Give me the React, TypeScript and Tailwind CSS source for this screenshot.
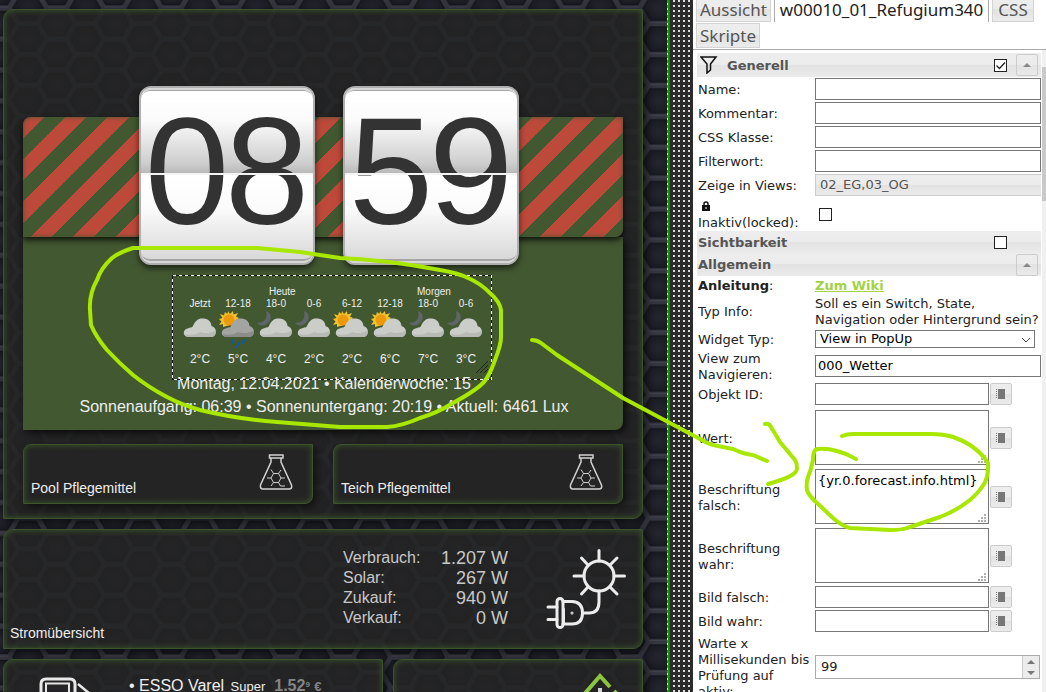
import { useState } from "react";
import type { ReactNode } from "react";

const FORECAST = [
  { time: "Jetzt", icon: "cloud",  temp: "2°C" },
  { time: "12-18", icon: "rain",   temp: "5°C" },
  { time: "18-0",  icon: "night",  temp: "4°C" },
  { time: "0-6",   icon: "night",  temp: "2°C" },
  { time: "6-12",  icon: "sunny",  temp: "2°C" },
  { time: "12-18", icon: "sunny",  temp: "6°C" },
  { time: "18-0",  icon: "night",  temp: "7°C" },
  { time: "0-6",   icon: "night",  temp: "3°C" },
];

const POWER = [
  ["Verbrauch:", "1.207 W"],
  ["Solar:", "267 W"],
  ["Zukauf:", "940 W"],
  ["Verkauf:", "0 W"],
];

const PANEL = "border border-[#3c532c] bg-[#242424]/85 shadow-[inset_0_0_6px_#3d5a2a,3px_3px_8px_rgba(0,0,0,0.6)]";
const INPUT = "h-[22px] min-w-0 border border-[#767676] bg-white px-[2px] text-[13px] text-black outline-none";
const BAR = "bg-[linear-gradient(#ededed_0%,#ececec_50%,#e2e2e2_50%,#ebebeb_100%)]";

function HexBackground() {
  return (
    <svg className="absolute inset-0 h-full w-full" aria-hidden="true">
      <defs>
        <radialGradient id="cell">
          <stop offset="0" stopColor="#24252f" />
          <stop offset="1" stopColor="#1a1b22" />
        </radialGradient>
        <pattern id="hex" width="57.3" height="30.9" patternUnits="userSpaceOnUse" patternTransform="translate(28 39)">
          <rect width="58" height="31" fill="#34353f" />
          {[[0, 0], [57.3, 0], [0, 30.9], [57.3, 30.9], [28.65, 15.45]].map(([x, y], i) => (
            <g key={i} transform={`translate(${x} ${y})`}>
              <path d="M-15 0L-8 -12H8L15 0L8 12H-8Z" fill="url(#cell)" stroke="#16171d" strokeWidth="1.5" />
              <path d="M-9 14.500H9" stroke="#41424e" strokeWidth="1" />
            </g>
          ))}
        </pattern>
      </defs>
      <rect width="100%" height="100%" fill="url(#hex)" />
    </svg>
  );
}

function WeatherIcon({ kind }: { kind: string }) {
  return (
    <svg viewBox="0 0 38 38" className="block h-[38px] w-[38px]">
      {(kind === "sunny" || kind === "rain") && (
        <g>
          <path d="M9 0L11 3L14 0L14.500 3.500L19 2L17 5.500L20 7L17 9L18 12L4 16L4 13L0 14L2.500 10.500L0 8L3.500 7L1 3L5 4.500L6 1L8.500 3Z" fill="#f2c230" />
          <circle cx="10" cy="9" r="5.500" fill="#ec9a0c" />
        </g>
      )}
      {kind === "night" && <path d="M9 0C16 2 15 11 8 14C5 15 2 14 0 12C7 12 11 8 9 0Z" fill="#5f666a" />}
      <path
        d="M8 26C1 26 1 18 8 17C10 16 11 17 12 15C14 10 17 7.500 21 7.500C27 7.500 30 10 30.500 15C37 17 36 26 30 26Z"
        fill={kind === "rain" ? "#a3a5a2" : "#cbcdc9"}
      />
      <path
        d="M4 23C11 25 16 23 19 21C24 23 30 22 34.500 20C35 24 33 26 30 26H8C6 26 4.500 25 4 23Z"
        fill={kind === "rain" ? "#8b8d8a" : "#b7bab5"}
      />
      {kind === "rain" && (
        <path d="M13 29L14.500 32M20 32L17.500 36M25.500 29L23.500 32" stroke="#0d5ba6" strokeWidth="2" strokeLinecap="round" />
      )}
    </svg>
  );
}

function FlipCard({ digits }: { digits: string }) {
  return (
    <div className="relative h-[179px] w-[176px] rounded-[12px] border-2 border-[#aeaeae] bg-white shadow-[0_3px_6px_rgba(0,0,0,0.6)]">
      <div className="flex h-full flex-col rounded-[10px] border-y-2 border-[#d6d6d6]">
        <div className="flex-1 rounded-t-[9px] border-t border-[#a5a5a5] bg-[linear-gradient(#fff_0%,#fbfbfb_35%,#cfcfcf_85%,#b5b5b5_100%)]" />
        <div className="flex-1 rounded-b-[9px] border-b-2 border-[#a5a5a5] bg-[linear-gradient(#fff_0%,#fbfbfb_40%,#d8d8d8_100%)]" />
      </div>
      <div className="absolute inset-0 flex items-center justify-center pb-[10px] text-[152px] leading-none text-[#333]">
        {digits.split("").map((d, i) => (
          <span key={i} className="flex w-20 justify-center">{d}</span>
        ))}
      </div>
      <div className="absolute inset-x-0 top-[85px] h-[2px] bg-[#f4f4f4]" />
    </div>
  );
}

function Flask() {
  return (
    <svg viewBox="0 0 34 36" className="h-9 w-[34px]" fill="none" stroke="#d2d2d2" strokeWidth="1.500">
      <path d="M10.500 1H24V4H10.500ZM12 4V8L1.500 31Q0.800 35 4 35H30Q33.500 35 32.500 31L22 8V4" />
      <path d="M14.500 19.500H19.500L22 24L19.500 28.500H14.500L12 24ZM14.500 19.500L12 15.500M19.500 19.500L22 16M22 24H26M12 24H8M14.500 28.500L12 32M19.500 28.500L21.500 32H26" strokeWidth="1" />
    </svg>
  );
}

function CareTile({ label }: { label: string }) {
  return (
    <div className={`${PANEL} flex h-[60px] flex-1 rounded-tl-[8px] rounded-br-[8px] pr-[19px] pl-[7px]`}>
      <span className="mt-[34px] flex-1 text-[14px] leading-[18px] text-[#eee]">{label}</span>
      <div className="mt-[9px]"><Flask /></div>
    </div>
  );
}

function SunPlug() {
  return (
    <svg viewBox="0 0 82 82" className="h-[82px] w-[82px]" fill="none" stroke="#ececec" strokeWidth="3" strokeLinecap="round" strokeLinejoin="round">
      <circle cx="53" cy="28" r="15" />
      <path d="M53 2.500V13M28 28H38M68 28H78.500M35.500 10L42 17M71 10L64 17M35.500 46L42 39M71 46L64 39" />
      <path d="M53 43V54Q53 65 43 65H37M2 59H11M2 71.500H11" />
      <path d="M17 53.500H26Q36.500 54 36.500 65T26 76H17" />
      <rect x="11" y="50.500" width="6" height="29" rx="3" />
      <path d="M18 61V75" strokeWidth="2" />
      <circle cx="26" cy="65" r="0.500" strokeWidth="2" />
    </svg>
  );
}

function Weather() {
  return (
    <div className="relative mt-[38px] ml-[149px] h-[105px] w-[320px] pt-[11px] pl-[9px]">
      <svg className="absolute inset-0 h-full w-full" fill="none" shapeRendering="crispEdges" aria-hidden="true">
        <rect x="0.500" y="0.500" width="319" height="104" stroke="#111" />
        <rect x="0.500" y="0.500" width="319" height="104" stroke="#fff" strokeDasharray="3 3" />
        <path d="M308 98L316 90M312 98L316 94M304 98L316 86" stroke="#222" />
      </svg>
      <table className="w-[304px] table-fixed text-center text-[#eee]">
        <thead className="text-[10px] leading-[12px]">
          <tr className="[&>th]:font-normal">
            <th /><th />
            <th><span className="pl-[12px]">Heute</span></th>
            <th /><th /><th />
            <th><span className="pl-[8px]">Morgen</span></th>
            <th />
          </tr>
          <tr className="[&>th]:font-normal">
            {FORECAST.map((f, i) => <th key={i}>{f.time}</th>)}
          </tr>
        </thead>
        <tbody>
          <tr>
            {FORECAST.map((f, i) => <td key={i} className="pt-px"><WeatherIcon kind={f.icon} /></td>)}
          </tr>
          <tr className="text-[12px] leading-[20px]">
            {FORECAST.map((f, i) => <td key={i}>{f.temp}</td>)}
          </tr>
        </tbody>
      </table>
    </div>
  );
}

function Dashboard() {
  return (
    <main className="relative min-w-0 flex-1 overflow-hidden bg-[#1e1f26] font-['Liberation_Sans',Arial,sans-serif]">
      <HexBackground />
      <div className="relative flex flex-col gap-[10px] pt-[9px] pr-6 pl-[3px]">
        <section className={`${PANEL} h-[510px] rounded-tl-[10px] rounded-tr-[2px] rounded-br-[10px] px-[19px] pt-[107px]`}>
          <div className="relative z-10 h-[120px] rounded-tl-[8px] rounded-br-[8px] bg-[repeating-linear-gradient(135deg,#bd493a_0px,#bd493a_15px,#425831_15px,#425831_30px)] shadow-[inset_0_0_5px_#425831,0_3px_6px_rgba(0,0,0,0.8)]">
            <div className="absolute top-[-31px] left-[116px] flex gap-7">
              <FlipCard digits="08" />
              <FlipCard digits="59" />
            </div>
          </div>
          <div className="flex h-[193px] flex-col rounded-br-[8px] bg-[#425831] shadow-[3px_3px_8px_rgba(0,0,0,0.7)]">
            <Weather />
            <div className="-mt-2 pl-[2px] text-center text-[16px] leading-[23px] text-[#eee]">
              <p>Montag, 12.04.2021 • Kalenderwoche: 15</p>
              <p>Sonnenaufgang: 06:39 • Sonnenuntergang: 20:19 • Aktuell: 6461 Lux</p>
            </div>
          </div>
          <div className="mt-[14px] flex gap-5">
            <CareTile label="Pool Pflegemittel" />
            <CareTile label="Teich Pflegemittel" />
          </div>
        </section>

        <section className={`${PANEL} flex h-[120px] rounded-tl-[10px] rounded-tr-[2px] rounded-br-[10px] pr-[14px] pl-[6px]`}>
          <h2 className="mt-[94px] flex-1 text-[14px] leading-[18px] text-[#eee]">Stromübersicht</h2>
          <table className="mt-[18px] mr-[38px] w-[165px] self-start text-[#c8c8c8]">
            <tbody>
              {POWER.map(([name, value]) => (
                <tr key={name}>
                  <th scope="row" className="text-left align-top text-[16px] leading-[20px] font-normal">{name}</th>
                  <td className="text-right text-[18px] leading-[20px]">{value}</td>
                </tr>
              ))}
            </tbody>
          </table>
          <div className="mt-[18px]"><SunPlug /></div>
        </section>

        <div className="grid grid-cols-[380fr_250fr] gap-[10px]">
          <section className={`${PANEL} flex h-[120px] rounded-tl-[10px] rounded-tr-[2px] pt-4 pl-[34px]`}>
            <svg viewBox="0 0 60 60" className="h-[60px] w-[60px]" fill="none" stroke="#e8e8e8" strokeWidth="3">
              <path d="M3 60V8Q3 3 8 3H32Q37 3 37 8V60" />
              <path d="M8 30V7.500H31V30Z" strokeWidth="2" />
              <path d="M40 8L52 18V40" strokeWidth="2.500" />
            </svg>
            <p className="ml-[31px] text-[16px] leading-[20px] whitespace-nowrap text-[#eee]">
              • ESSO Varel <span className="ml-[2px] text-[13px]">Super</span>
              <b className="ml-[9px] text-[#858585]">1.52<sup className="text-[8px]">9</sup> <span className="text-[13px]">€</span></b>
            </p>
          </section>
          <section className={`${PANEL} flex h-[120px] justify-end rounded-tl-[10px] rounded-tr-[2px] pt-[12px] pr-[14px]`}>
            <svg viewBox="0 0 56 56" className="h-14 w-14" fill="none" strokeWidth="4">
              <path d="M2 34L28 4L38 15M42 19L54 31" stroke="#8cc63f" />
              <path d="M28 16V34" stroke="#d8d8d8" />
            </svg>
          </section>
        </div>
      </div>
    </main>
  );
}

function PickButton({ label }: { label: string }) {
  return (
    <button aria-label={label} className={`${BAR} ml-[1px] flex h-[22px] w-[22px] shrink-0 items-center justify-center rounded-[2px] border border-[#ccc]`}>
      <svg viewBox="0 0 10 10" className="h-[10px] w-[10px]" fill="#777" shapeRendering="crispEdges">
        <path d="M2 0H9V10H2Z" />
        <path d="M0 0H1V1H0ZM0 2H1V3H0ZM0 4H1V5H0ZM0 6H1V7H0ZM0 8H1V9H0Z" />
      </svg>
    </button>
  );
}

function CollapseButton({ label }: { label: string }) {
  return (
    <button aria-label={label} className="mr-[3px] flex h-[22px] w-[22px] items-center justify-center rounded-[2px] border border-[#ccc]">
      <svg viewBox="0 0 8 4" className="h-1 w-2" fill="#888"><path d="M4 0L8 4H0Z" /></svg>
    </button>
  );
}

function Box({ id, checked, onChange, label, className }: { id: string; checked: boolean; onChange: () => void; label?: string; className: string }) {
  return (
    <span className={`${className} relative block h-[13px] w-[13px]`}>
      <input id={id} type="checkbox" aria-label={label} checked={checked} onChange={onChange}
        className="block h-[13px] w-[13px] appearance-none border border-[#222] bg-white" />
      {checked && (
        <svg viewBox="0 0 13 13" className="pointer-events-none absolute inset-0" fill="none" stroke="#222" strokeWidth="1.300">
          <path d="M2.500 6.500L5.500 9.500L11 3.500" />
        </svg>
      )}
    </span>
  );
}

function Row({ id, label, className = "h-6", children }: { id: string; label: ReactNode; className?: string; children: ReactNode }) {
  return (
    <div className={`${className} flex shrink-0 items-center`}>
      <label htmlFor={id} className="w-[118px] shrink-0 pt-[2px] pr-1 pl-px">{label}</label>
      {children}
    </div>
  );
}

function TextRow({ id, label, value = "", pick, className }: { id: string; label: string; value?: string; pick?: boolean; className?: string }) {
  return (
    <Row id={id} label={label} className={className}>
      <input id={id} type="text" defaultValue={value} className={pick ? `${INPUT} w-[174px]` : `${INPUT} flex-1`} />
      {pick && <PickButton label={`${label} auswählen`} />}
    </Row>
  );
}

function AreaRow({ id, label, value = "" }: { id: string; label: string; value?: string }) {
  return (
    <Row id={id} label={label} className="h-[59px]">
      <span className="relative block h-[55px] w-[174px]">
        <textarea id={id} defaultValue={value}
          className="block h-full w-full resize-none overflow-hidden border border-[#767676] bg-white px-[2px] py-[2px] text-[13px] leading-[18px] whitespace-nowrap text-black outline-none" />
        <svg viewBox="0 0 8 8" className="pointer-events-none absolute right-[3px] bottom-[2px] h-2 w-2" fill="#b0b0b0" shapeRendering="crispEdges">
          <path d="M6 0H8V2H6ZM3 3H5V5H3ZM6 3H8V5H6ZM0 6H2V8H0ZM3 6H5V8H3ZM6 6H8V8H6Z" />
        </svg>
      </span>
      <PickButton label={`${label} auswählen`} />
    </Row>
  );
}

function Inspector() {
  const [general, setGeneral] = useState(true);
  const [locked, setLocked] = useState(false);
  const [visibility, setVisibility] = useState(false);
  const tab = `${BAR} h-[25px] border border-[#d3d3d3] px-[3px] text-[#555]`;

  return (
    <aside className="flex h-full w-[353px] shrink-0 flex-col bg-white font-['DejaVu_Sans',Verdana,sans-serif] text-[13px] leading-4 text-[#222]">
      <nav className="flex h-[50px] shrink-0 flex-wrap content-end gap-x-[3px] gap-y-px border-b border-[#aaa] pb-px pl-[3px] font-['Noto_Sans',Verdana,sans-serif] text-[17px] leading-[23px]">
        <button className={tab}>Aussicht</button>
        <button className="h-[25px] border-x border-[#aaa] bg-white px-[5px] text-[#222]">w00010_01_Refugium340</button>
        <button className={`${BAR} h-[25px] border border-[#d3d3d3] px-[5px] text-[#555]`}>CSS</button>
        <button className={tab}>Skripte</button>
      </nav>

      <div className="flex min-h-0 flex-1">
        <form className="flex min-w-0 flex-1 flex-col overflow-hidden pt-[3px] pl-1" onSubmit={e => e.preventDefault()}>
          <div className={`${BAR} flex h-6 shrink-0 items-center`}>
            <svg viewBox="0 0 18 18" className="ml-[3px] h-[18px] w-[18px]" fill="none" stroke="#111" strokeWidth="1.500">
              <path d="M1 1H16L10.500 8V14L7 17V8Z" />
            </svg>
            <h2 className="ml-[9px] flex-1 pt-[2px] font-bold text-[#555]">Generell</h2>
            <Box id="general" label="Generell" checked={general} onChange={() => setGeneral(!general)} className="mr-[9px]" />
            <CollapseButton label="Generell einklappen" />
          </div>
          <TextRow id="name" label="Name:" />
          <TextRow id="comment" label="Kommentar:" />
          <TextRow id="css" label="CSS Klasse:" />
          <TextRow id="filter" label="Filterwort:" />
          <Row id="views" label="Zeige in Views:">
            <button id="views" type="button" className={`${BAR} h-[22px] flex-1 border border-r-0 border-[#ccc] px-1 text-left text-[#555]`}>02_EG,03_OG</button>
          </Row>
          <Row id="locked" className="h-[34px]" label={
            <>
              <svg viewBox="0 0 8 10" className="mt-[2px] mb-1 ml-1 h-[10px] w-2" fill="none">
                <path d="M2 5V3Q2 1 4 1T6 3V5" stroke="#111" strokeWidth="1.500" />
                <path d="M0 4H8V10H0Z" fill="#111" />
                <path d="M3.500 6H4.500V8H3.500Z" fill="#fff" />
              </svg>
              Inaktiv(locked):
            </>
          }>
            <Box id="locked" checked={locked} onChange={() => setLocked(!locked)} className="ml-1" />
          </Row>
          <div className={`${BAR} flex h-[22px] shrink-0 items-center pl-px`}>
            <h2 className="flex-1 pt-[2px] font-bold text-[#555]">Sichtbarkeit</h2>
            <Box id="visibility" label="Sichtbarkeit" checked={visibility} onChange={() => setVisibility(!visibility)} className="mr-[34px]" />
          </div>
          <div className={`${BAR} flex h-[23px] shrink-0 items-center pl-px`}>
            <h2 className="flex-1 font-bold text-[#555]">Allgemein</h2>
            <CollapseButton label="Allgemein einklappen" />
          </div>
          <div className="flex h-[19px] shrink-0 items-center">
            <span className="w-[118px] pl-px"><b>Anleitung</b>:</span>
            <a href="#wiki" className="font-bold text-[#a2d246] underline">Zum Wiki</a>
          </div>
          <div className="flex h-[33px] shrink-0 items-center">
            <span className="w-[118px] shrink-0 pl-px">Typ Info:</span>
            <p className="whitespace-nowrap">Soll es ein Switch, State,<br />Navigation oder Hintergrund sein?</p>
          </div>
          <Row id="type" label="Widget Typ:" className="h-[21px]">
            <span className="relative mr-[6px] block flex-1">
              <select id="type" className="block h-[18px] w-full appearance-none border border-[#767676] bg-white pl-1 text-[13px] leading-4 text-black">
                <option>View in PopUp</option>
              </select>
              <svg viewBox="0 0 10 6" className="pointer-events-none absolute top-[7px] right-[4px] h-[6px] w-[10px]" fill="none" stroke="#444">
                <path d="M1 1L5 5L9 1" />
              </svg>
            </span>
          </Row>
          <TextRow id="view" label="View zum Navigieren:" value="000_Wetter" className="h-[33px]" />
          <TextRow id="oid" label="Objekt ID:" pick className="mb-[2px] h-6" />
          <AreaRow id="value" label="Wert:" />
          <AreaRow id="captionFalse" label="Beschriftung falsch:" value="{yr.0.forecast.info.html}" />
          <AreaRow id="captionTrue" label="Beschriftung wahr:" />
          <TextRow id="imageFalse" label="Bild falsch:" pick />
          <TextRow id="imageTrue" label="Bild wahr:" pick />
          <Row id="delay" label="Warte x Millisekunden bis Prüfung auf aktiv:" className="mt-px h-[66px]">
            <span className="mr-px flex h-6 flex-1 border border-[#aaa]">
              <input id="delay" type="text" defaultValue="99" className="min-w-0 flex-1 px-[5px] text-[13px] text-[#222] outline-none" />
              <span className="flex w-[17px] flex-col border-l border-[#ccc] bg-[#ececec]">
                <button aria-label="Mehr" className="flex flex-1 items-center justify-center">
                  <svg viewBox="0 0 8 4" className="h-1 w-2" fill="#777"><path d="M4 0L8 4H0Z" /></svg>
                </button>
                <button aria-label="Weniger" className="flex flex-1 items-center justify-center">
                  <svg viewBox="0 0 8 4" className="h-1 w-2" fill="#777"><path d="M4 4L8 0H0Z" /></svg>
                </button>
              </span>
            </span>
          </Row>
        </form>
        <div className="ml-px w-1 bg-[#f0f0f0] pt-[17px]">
          <div className="h-[134px] bg-[#c9c9c9]" />
        </div>
      </div>
    </aside>
  );
}

// freehand marker strokes over the editor
function Annotations() {
  return (
    <svg viewBox="0 0 1046 692" className="pointer-events-none absolute top-0 left-0 z-30 h-[692px] w-[1046px]" fill="none" stroke="#a8e800" strokeWidth="4" strokeLinecap="round" strokeLinejoin="round">
      <path d="M133 248Q120 252 112 258Q101 268 97 280Q89 294 90 310L91 325Q96 337 107 350Q119 363 133 375Q148 387 167 397Q182 405 200 410Q237 419 277 422L340 427H387Q402 426 420 418Q437 413 453 403Q475 391 483 383Q489 377 495 360Q501 345 501 337V310Q500 302 490 293Q480 283 468 278Q458 273 440 270Q388 260 340 258L300 252L257 248Z" />
      <path d="M532 340Q537 340 541 343L557 355L623 398L700 439Q706 443 713 445L733 449Q743 454 753 455L767 461" />
      <path d="M765 424Q769 423 771 427L780 442L795 460Q797 463 797 468Q797 472 792 475Q786 479 768 484" />
      <path d="M842 436Q847 434 853 434H930Q944 434 953 437Q962 440 970 445Q983 454 988 463Q989 478 982 487Q978 493 970 500Q956 511 940 517L907 528Q902 530 890 530L850 528Q842 526 833 518L817 503Q809 496 807 490Q806 483 808 477Q811 470 813 460Q813 450 817 449Q827 448 837 451L846 454L856 459" />
    </svg>
  );
}

export default function App() {
  return (
    <div className="relative flex h-screen overflow-hidden bg-white">
      <Dashboard />
      <div className="w-px shrink-0 bg-[repeating-linear-gradient(#1fae00_0px,#1fae00_3px,#ddd_3px,#ddd_5px)]" />
      <div className="w-px shrink-0 bg-[#0c9a00]" />
      <div className="w-px shrink-0 bg-[#e01b10]" />
      <div className="w-[23px] shrink-0 bg-[#2b2b2b] bg-[conic-gradient(from_90deg_at_3px_2px,transparent_270deg,#ddd_0deg)] bg-[size:5px_5px]" />
      <Inspector />
      <Annotations />
    </div>
  );
}
